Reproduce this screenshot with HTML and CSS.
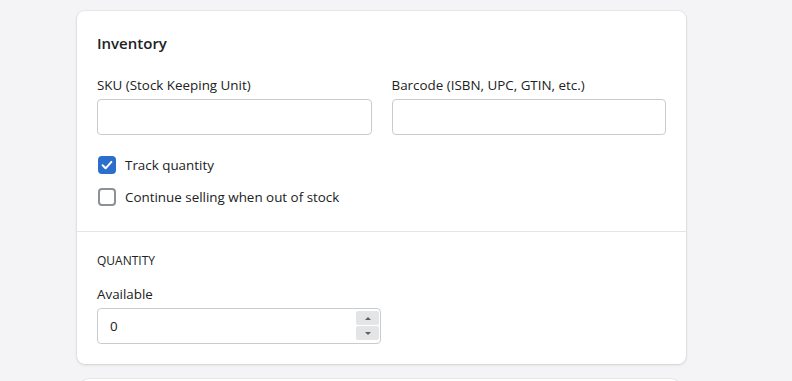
FILE: index.html
```html
<!DOCTYPE html>
<html lang="en">

<head>
    <meta charset="UTF-8">
    <meta name="viewport" content="width=device-width, initial-scale=1.0">
    <title>Inventory</title>
    <link rel="stylesheet" href="styles.css">
</head>

<body>
    <div class="page">
        <div class="card">
            <div class="card-section">
                <h2 class="card-title">Inventory</h2>
                <div class="field-row">
                    <div class="field">
                        <label for="sku">SKU (Stock Keeping Unit)</label>
                        <input type="text" id="sku" name="sku">
                    </div>
                    <div class="field">
                        <label for="barcode">Barcode (ISBN, UPC, GTIN, etc.)</label>
                        <input type="text" id="barcode" name="barcode">
                    </div>
                </div>
                <div class="checks">
                    <label class="check">
                        <span class="box checked">
                            <svg viewBox="0 0 18 18" width="18" height="18">
                                <path d="M4.6 9.3l3 3 5.8-6.4" fill="none" stroke="#fff" stroke-width="2" stroke-linecap="round" stroke-linejoin="round" />
                            </svg>
                        </span>
                        Track quantity
                    </label>
                    <label class="check">
                        <span class="box"></span>
                        Continue selling when out of stock
                    </label>
                </div>
            </div>
            <div class="card-section">
                <h3 class="subheading">QUANTITY</h3>
                <div class="field field-small">
                    <label for="available">Available</label>
                    <div class="number">
                        <input type="text" id="available" name="available" value="0">
                        <div class="spinner">
                            <span class="spin up"></span>
                            <span class="spin down"></span>
                        </div>
                    </div>
                </div>
            </div>
        </div>
        <div class="card card-next"></div>
    </div>
</body>

</html>
```

FILE: styles.css
```css
body {
    margin: 0;
    background: #f4f4f6;
    font-family: "Open Sans", "Noto Sans", sans-serif;
    color: #202223;
    font-size: 13.4px;
}

.page {
    padding: 11px 0 0 77px;
    height: 370px;
    overflow: hidden;
}

.card {
    width: 609px;
    background: #fff;
    border-radius: 8px;
    box-shadow: 0 0 0 1px rgba(63, 63, 68, 0.05), 0 1px 3px rgba(63, 63, 68, 0.15);
}

.card-next {
    margin-top: 15px;
    height: 40px;
    width: 598px;
    margin-left: 4px;
}

.card-section {
    padding: 21px 20px 22px;
}

.card-section + .card-section {
    border-top: 1px solid #e4e5e7;
    padding-top: 21px;
    padding-bottom: 20px;
}

.card-title {
    margin: 0 0 21px;
    font-size: 15px;
    font-weight: 600;
    line-height: 22px;
}

.field-row {
    display: flex;
    gap: 20px;
}

.field {
    flex: 1;
    display: flex;
    flex-direction: column;
    gap: 4px;
}

.field label {
    line-height: 20px;
}

.field input {
    height: 36px;
    box-sizing: border-box;
    border: 1px solid #c9cccf;
    border-radius: 4px;
    padding: 0 12px;
    font: inherit;
    color: inherit;
    width: 100%;
}

.field-small {
    width: 284px;
}

.checks {
    margin-top: 18px;
    display: flex;
    flex-direction: column;
    gap: 8px;
}

.check {
    display: flex;
    align-items: center;
    gap: 9px;
    height: 24px;
    padding-left: 1px;
}

.box {
    width: 18px;
    height: 18px;
    box-sizing: border-box;
    border: 2px solid #8c9196;
    border-radius: 4px;
    display: flex;
}

.box.checked {
    background: #2c6ecb;
    border-color: #2c6ecb;
}

.box.checked svg {
    margin: -2px;
}

.subheading {
    margin: 0 0 15px;
    font-size: 12px;
    font-weight: 500;
    line-height: 16px;
}

.number {
    position: relative;
}

.spinner {
    position: absolute;
    top: 3px;
    right: 2px;
    display: flex;
    flex-direction: column;
    gap: 1px;
}

.spin {
    width: 23px;
    height: 14px;
    background: #e4e5e7;
    border-radius: 2px;
    display: flex;
    align-items: center;
    justify-content: center;
}

.spin::after {
    content: "";
    border-left: 3px solid transparent;
    border-right: 3px solid transparent;
}

.up::after {
    border-bottom: 3px solid #5c5f62;
}

.down::after {
    border-top: 3px solid #5c5f62;
}
```
